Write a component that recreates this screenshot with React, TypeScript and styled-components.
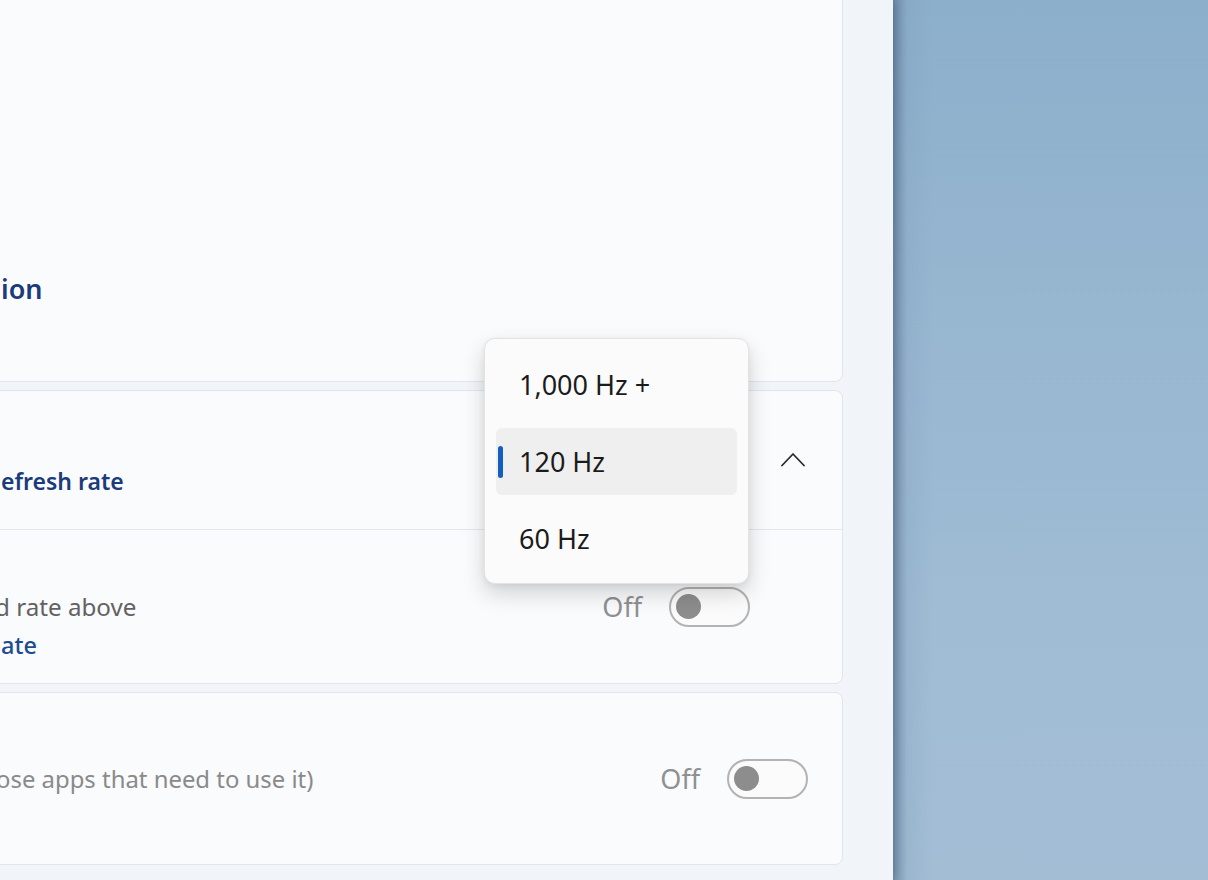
import React from "react";
import styled, { createGlobalStyle } from "styled-components";

const GlobalStyle = createGlobalStyle`
  html, body {
    margin: 0;
    padding: 0;
    width: 1208px;
    height: 880px;
    overflow: hidden;
    font-family: "Noto Sans", "Open Sans", sans-serif;
  }
`;

const Screen = styled.div`
  display: flex;
  width: 1208px;
  height: 880px;
  overflow: hidden;
`;

const Window = styled.div`
  position: relative;
  width: 893px;
  height: 880px;
  flex: none;
  background: #f1f4f9;
  overflow: hidden;
  z-index: 1;
  box-shadow: 2px 0 10px rgba(40, 60, 90, 0.35);
`;

const Wallpaper = styled.div`
  flex: 1;
  background:
    linear-gradient(to right, rgba(90, 115, 145, 0.55) 0px, rgba(120, 150, 180, 0.2) 14px, rgba(0, 0, 0, 0) 40px),
    linear-gradient(to bottom, #8cafcb 0%, #97b6d0 35%, #a0bcd5 70%, #a3bdd5 100%);
`;

const CardList = styled.div`
  display: flex;
  flex-direction: column;
  gap: 8px;
  margin: -20px 50px 0 -20px;
`;

const Card = styled.div<{ $h: number }>`
  height: ${(p) => p.$h}px;
  box-sizing: border-box;
  background: #fafbfd;
  border: 1px solid #e2e5eb;
  border-radius: 8px;
  display: flex;
  flex-direction: column;
  overflow: hidden;
`;

const TitleBlock = styled.div`
  margin-top: auto;
  padding: 0 0 75px 20px;
`;

const Title = styled.div<{ $size: number }>`
  font-size: ${(p) => p.$size}px;
  font-weight: 600;
  color: #1b3b7a;
  line-height: 34px;
  white-space: nowrap;
`;

const ExpanderHeader = styled.div`
  height: 139px;
  flex: none;
  display: flex;
  align-items: center;
  border-bottom: 1px solid #e4e6eb;
  box-sizing: border-box;
  padding-right: 37px;
`;

const HeaderText = styled.div`
  align-self: flex-end;
  padding: 0 0 31px 20px;
  flex: 1;
`;

const Chevron = styled.svg`
  width: 24px;
  height: 16px;
  flex: none;
  margin-top: -2px;
`;

const Row = styled.div<{ $right: number }>`
  flex: 1;
  display: flex;
  align-items: center;
  padding-right: ${(p) => p.$right}px;
`;

const RowText = styled.div<{ $top: number }>`
  flex: 1;
  align-self: ${(p) => (p.$top > 0 ? "flex-start" : "center")};
  padding: ${(p) => Math.max(p.$top, 0)}px 0 0 20px;
  display: flex;
  flex-direction: column;
`;

const Desc = styled.div<{ $shift: number; $color: string; $size: number }>`
  font-size: ${(p) => p.$size}px;
  line-height: 38px;
  color: ${(p) => p.$color};
  margin-left: ${(p) => p.$shift}px;
  white-space: nowrap;
`;

const Link = styled.div`
  font-size: 23.5px;
  line-height: 38px;
  color: #1d4b8f;
  font-weight: 500;
  white-space: nowrap;
`;

const ToggleGroup = styled.div`
  display: flex;
  align-items: center;
  gap: 27px;
`;

const OffLabel = styled.span`
  font-size: 27px;
  color: #909090;
  line-height: 40px;
  font-weight: 400;
`;

const Toggle = styled.div`
  width: 81px;
  height: 40px;
  flex: none;
  box-sizing: border-box;
  border: 2px solid #b3b3b3;
  border-radius: 20px;
  display: flex;
  align-items: center;
  padding-left: 5px;
  background: #fbfbfb;
`;

const Knob = styled.div`
  width: 25px;
  height: 25px;
  border-radius: 50%;
  background: #8d8d8d;
`;

const Menu = styled.div`
  position: absolute;
  left: 484px;
  top: 338px;
  width: 265px;
  height: 246px;
  box-sizing: border-box;
  padding: 12px 11px;
  background: #fbfbfb;
  border: 1px solid #e3e3e3;
  border-radius: 11px;
  box-shadow: 0 10px 22px rgba(0, 0, 0, 0.16), 0 2px 6px rgba(0, 0, 0, 0.06);
  display: flex;
  flex-direction: column;
  gap: 10px;
`;

const MenuItem = styled.div<{ $selected?: boolean }>`
  position: relative;
  height: 67px;
  flex: none;
  display: flex;
  align-items: center;
  padding-left: 23px;
  border-radius: 6px;
  background: ${(p) => (p.$selected ? "#efefef" : "transparent")};
  font-size: 27px;
  color: #1b1b1b;
  white-space: nowrap;
`;

const Indicator = styled.span`
  position: absolute;
  left: 2px;
  top: 18px;
  width: 5px;
  height: 32px;
  border-radius: 3px;
  background: #135fc0;
`;

const OffSwitch = () => (
  <ToggleGroup>
    <OffLabel>Off</OffLabel>
    <Toggle>
      <Knob />
    </Toggle>
  </ToggleGroup>
);

export default function App() {
  return (
    <>
      <GlobalStyle />
      <Screen>
        <Window>
          <CardList>
            <Card $h={402}>
              <TitleBlock>
                <Title $size={27}>ion</Title>
              </TitleBlock>
            </Card>
            <Card $h={294}>
              <ExpanderHeader>
                <HeaderText>
                  <Title $size={23}>efresh rate</Title>
                </HeaderText>
                <Chevron viewBox="0 0 24 16">
                  <path d="M1 14.5 L12 3 L23 14.5" fill="none" stroke="#2b2b2b" strokeWidth="1.8" strokeLinecap="round" strokeLinejoin="round" />
                </Chevron>
              </ExpanderHeader>
              <Row $right={92}>
                <RowText $top={58}>
                  <Desc $shift={-6} $size={24.2} $color="#626262">d rate above</Desc>
                  <Link>ate</Link>
                </RowText>
                <OffSwitch />
              </Row>
            </Card>
            <Card $h={173}>
              <Row $right={34}>
                <RowText $top={0}>
                  <Desc $shift={-5} $size={23.9} $color="#8a8a8a">ose apps that need to use it)</Desc>
                </RowText>
                <OffSwitch />
              </Row>
            </Card>
          </CardList>
          <Menu>
            <MenuItem>1,000 Hz +</MenuItem>
            <MenuItem $selected>
              <Indicator />
              120 Hz
            </MenuItem>
            <MenuItem>60 Hz</MenuItem>
          </Menu>
        </Window>
        <Wallpaper />
      </Screen>
    </>
  );
}
